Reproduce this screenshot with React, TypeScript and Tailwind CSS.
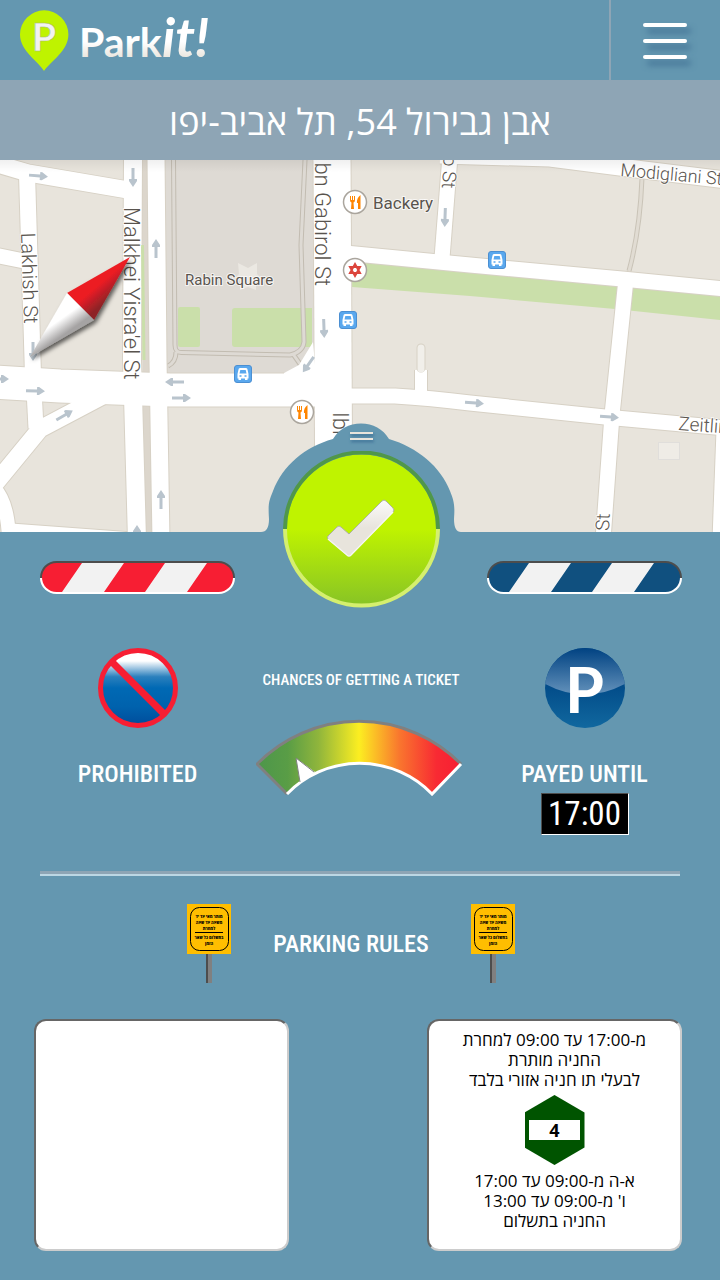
import React from 'react';

const ROADS: { d: string; w: number }[] = [
  { d: 'M-6 3 L28 13 L128 30', w: 17 },
  { d: 'M27 14 L33 215', w: 16 },
  { d: 'M-6 95 L24 101', w: 15 },
  { d: 'M133 -4 L132 200 L137 380', w: 18 },
  { d: 'M156 -4 L158 200 L161 380', w: 17 },
  { d: 'M-6 222 L60 226 L170 230 L345 230', w: 33 },
  { d: 'M34 230 L36 268', w: 15 },
  { d: 'M112 231 L40 269 L-6 325', w: 17 },
  { d: 'M-6 328 Q8 342 9 380', w: 14 },
  { d: 'M4 370 L140 380', w: 14 },
  { d: 'M332 -4 L334 380', w: 37 },
  { d: 'M345 236 L395 236 Q430 238 470 243 L605 257 L726 268', w: 15 },
  { d: 'M345 93 L470 105 L622 119 L726 129', w: 15 },
  { d: 'M450 -4 L442 98', w: 15 },
  { d: 'M440 -5 L550 -2 L620 7 L726 20', w: 17 },
  { d: 'M626 119 L612 255 L603 380', w: 15 },
  { d: 'M724 270 L720 380', w: 15 },
  { d: 'M421 210 L421 236', w: 12 },
];

// [x, y, angle]
const ARROWS: [number, number, number][] = [
  [39, 16, 5], [133, 18, 90], [156, 88, -90], [174, 222, 180], [182, 238, 0],
  [36, 231, 2], [0, 219, 0], [65, 255, -30], [161, 339, -90], [33, 192, 90],
  [137, 374, -90], [324, 169, 88], [308, 205, 125], [445, 58, 92], [475, 243, 4], [610, 257, 4],
];

const Bus = ({ x, y }: { x: number; y: number }) => (
  <g transform={`translate(${x - 9} ${y - 9})`}>
    <rect x="0.5" y="0.5" width="17" height="17" rx="2.5" fill="#5aa8ee" stroke="#4b8fd2" />
    <path d="M4.500 4.5 Q4.500 3 6 3 H12 Q13.500 3 13.500 4.500 L14.500 9 V13.500 H13.500 V15 H11 V13.500 H7 V15 H4.500 V13.500 H3.500 V9Z" fill="#fff" />
    <path d="M6.300 5 H11.700 L12.500 8.500 H5.500Z" fill="#5aa8ee" />
    <path d="M5.500 11 H7.500 M10.500 11 H12.500" stroke="#5aa8ee" strokeWidth="1.300" />
  </g>
);

const Poi = ({ x, y, children }: { x: number; y: number; children: React.ReactNode }) => (
  <g transform={`translate(${x} ${y})`}>
    <circle r="11.500" fill="#fff" stroke="#aaa59d" strokeWidth="1.500" />
    {children}
  </g>
);

const Cutlery = () => (
  <g fill="#ff8500">
    <path d="M-5 -6 V-2 Q-5 0 -3.500 0.500 L-4 7 H-1 L-1.500 0.500 Q0 0 0 -2 V-6 H-1 V-2 H-2 V-6 H-3 V-2 H-4 V-6Z" />
    <path d="M5.500 -7 Q1.500 -4 2 1 H3 V7 H5.500Z" />
  </g>
);

const CityMap = () => (
  <svg
    role="img"
    aria-label="Map"
    viewBox="0 0 720 372"
    preserveAspectRatio="xMidYMid slice"
    className="block h-[372px] w-full"
  >
    <defs>
      <linearGradient id="needleRed" gradientUnits="userSpaceOnUse" x1="88" y1="124" x2="104" y2="143">
        <stop offset="0.3" stopColor="#ec1c24" />
        <stop offset="1" stopColor="#8e2228" />
      </linearGradient>
      <linearGradient id="needleWhite" gradientUnits="userSpaceOnUse" x1="58" y1="155" x2="72" y2="175">
        <stop offset="0.2" stopColor="#fff" />
        <stop offset="0.8" stopColor="#a5a3a3" />
      </linearGradient>
      <linearGradient id="mapTop" x1="0" y1="0" x2="0" y2="1">
        <stop offset="0" stopColor="#000" stopOpacity="0.06" />
        <stop offset="1" stopColor="#000" stopOpacity="0" />
      </linearGradient>
      <filter id="needleShadow" x="-20%" y="-20%" width="150%" height="150%">
        <feDropShadow dx="2" dy="3" stdDeviation="2" floodOpacity="0.6" />
      </filter>
    </defs>
    <rect width="720" height="372" fill="#e8e4dc" />
    <path d="M142 0 H150 L154 372 H143Z" fill="#dcd6cc" />

    {/* Parks */}
    <path d="M352 101 L470 112 L720 136 V160 L615 149 L470 136 L352 127Z" fill="#cadfaa" />
    <path d="M165 0 H316 V213 H165Z" fill="#dedad4" />
    <rect x="178" y="147" width="22" height="40" rx="2" fill="#cadfaa" />
    <path d="M235 148 H312 V187 H235 Q232 187 232 184 V151 Q232 148 235 148Z" fill="#cadfaa" />
    <path
      d="M173.500 0 L175 185 Q175 193 182 192.500 L290 195 Q303 192 304 182 L301 85 L305 0 M176 192 Q176 202 168 206 M293 194 L300 204"
      fill="none" stroke="#c2bcb1" strokeWidth="5"
    />
    <path
      d="M173.500 0 L175 185 Q175 193 182 192.500 L290 195 Q303 192 304 182 L301 85 L305 0 M176 192 Q176 202 168 206 M293 194 L300 204"
      fill="none" stroke="#dedad4" strokeWidth="3"
    />
    <path d="M238 103 L248 108 L257 103 V114 L262 119 L256 122 V130 L248 127 L240 130 V121 L236 117 L239 114Z" fill="#ebe8e2" />
    <path d="M642 18 Q640 70 629 111" fill="none" stroke="#c9c3b7" strokeWidth="5" />
    <path d="M642 18 Q640 70 629 111" fill="none" stroke="#e1dcd3" strokeWidth="3" />
    <rect x="658.500" y="282.500" width="21" height="17" fill="#efece6" stroke="#e0dedb" />

    {/* Streets */}
    <g fill="none" stroke="#d7d1c5">
      {ROADS.map((r) => <path key={r.d} d={r.d} strokeWidth={r.w + 2} />)}
    </g>
    <g fill="none" stroke="#fff">
      {ROADS.map((r) => <path key={r.d} d={r.d} strokeWidth={r.w} />)}
    </g>
    <path d="M313 182 L299 205 L284 213 L284 216 H316Z" fill="#fff" />
    <path d="M142.500 85 L144 200" stroke="#cadfaa" strokeWidth="3" />
    <path d="M421 188 V208" stroke="#d7d1c5" strokeWidth="9" strokeLinecap="round" />
    <path d="M421 188 V209" stroke="#f1efea" strokeWidth="7" strokeLinecap="round" />
    <g fill="#b9c4cd">
      {ARROWS.map(([x, y, a]) => (
        <path key={`${x}-${y}`} transform={`translate(${x} ${y}) rotate(${a})`} d="M-10 -1.500 H1 V-4 H3 L9 0 L3 4 H1 V1.500 H-10Z" />
      ))}
    </g>

    {/* Labels */}
    <g
      fill="#59544e" stroke="#fff" strokeWidth="2" strokeOpacity="0.7"
      className="font-['Roboto',sans-serif] font-light [paint-order:stroke]"
    >
      <text transform="translate(21 73) rotate(88)" fontSize="20">Lakhish St</text>
      <text transform="translate(124 47) rotate(90)" fontSize="22">Malkhei Yisra'el St</text>
      <text transform="translate(315 126) rotate(90)" fontSize="22" textAnchor="end">Ibn Gabirol St</text>
      <text transform="translate(333 252) rotate(90)" fontSize="22">Ibn</text>
      <text transform="translate(442 28) rotate(93)" fontSize="19" textAnchor="end">o St</text>
      <text transform="translate(609 371) rotate(-88)" fontSize="19">St</text>
      <text transform="translate(620 16) rotate(5)" fontSize="18">Modigliani St</text>
      <text transform="translate(678 270) rotate(4)" fontSize="19">Zeitlin</text>
      <text x="373" y="49" fontSize="17" className="font-normal">Backery</text>
      <text x="185" y="125" fontSize="15" className="font-normal">Rabin Square</text>
    </g>

    <Bus x={348} y={160} />
    <Bus x={243} y={214} />
    <Bus x={497} y={100} />
    <Poi x={355} y={42}><Cutlery /></Poi>
    <Poi x={302} y={252}><Cutlery /></Poi>
    <Poi x={355} y={110}>
      <path d="M0 -6 L5 3 H-5Z M0 6 L5 -3 H-5Z" fill="none" stroke="#dc453c" strokeWidth="2" />
    </Poi>

    {/* Compass needle */}
    <g filter="url(#needleShadow)">
      <path d="M130 97 L67 133 L94 160Z" fill="url(#needleRed)" />
      <path d="M30 197 L67 133 L94 160Z" fill="url(#needleWhite)" />
    </g>
    <rect width="720" height="12" fill="url(#mapTop)" />
  </svg>
);

const StripedBar = ({ id, color }: { id: string; color: string }) => (
  <svg viewBox="0 0 195 33" className="block h-[33px] w-[195px]" aria-hidden="true">
    <clipPath id={id}><rect x="2" y="2" width="191" height="29" rx="14.500" /></clipPath>
    <path d="M0 17 V16.500 A16.500 16.500 0 0 1 16.500 0 H178.500 A16.500 16.500 0 0 1 195 16.500 V17Z" fill="#4d4d4d" />
    <path d="M0 17 A16.500 16 0 0 0 16.500 33 H178.500 A16.500 16 0 0 0 195 17Z" fill="#fff" />
    <g clipPath={`url(#${id})`}>
      <rect width="195" height="33" fill={color} />
      <path d="M42 2 H84 L64 31 H22Z M125 2 H167 L147 31 H105Z" fill="#f2f2f2" />
    </g>
  </svg>
);

const Gauge = () => (
  <svg viewBox="2 0 210 80" className="block h-[80px] w-[210px]" role="img" aria-label="Low chance">
    <defs>
      <linearGradient id="risk">
        <stop offset="0" stopColor="#4d964b" />
        <stop offset="0.15" stopColor="#599d46" />
        <stop offset="0.3" stopColor="#8fb53c" />
        <stop offset="0.5" stopColor="#fcee21" />
        <stop offset="0.7" stopColor="#f9752e" />
        <stop offset="0.88" stopColor="#f82a33" />
        <stop offset="1" stopColor="#f71e33" />
      </linearGradient>
    </defs>
    <path d="M3 46 A143 143 0 0 1 207 46 L178 76 A101 101 0 0 0 33 76Z" fill="url(#risk)" />
    <path d="M33 76 L3 46 A143 143 0 0 1 207 46" fill="none" stroke="#808080" strokeWidth="3" />
    <path d="M207 46 L178 76 A101 101 0 0 0 33 76" fill="none" stroke="#fff" strokeWidth="3" />
    <path d="M42 40 L61 54 L46 65Z" fill="#fff" />
    <path d="M46 64 L42 40 L60 54" fill="none" stroke="#808080" />
  </svg>
);

const NoParking = () => (
  <svg viewBox="0 0 80 80" className="block size-20" aria-hidden="true">
    <defs>
      <linearGradient id="noPark" x1="0" y1="0" x2="0" y2="1">
        <stop offset="0.06" stopColor="#fff" />
        <stop offset="0.14" stopColor="#fff" />
        <stop offset="0.35" stopColor="#2b80bd" />
        <stop offset="0.5" stopColor="#0069b4" />
        <stop offset="0.75" stopColor="#0062ad" />
        <stop offset="1" stopColor="#004c9b" />
      </linearGradient>
    </defs>
    <circle cx="40" cy="40" r="37.500" fill="url(#noPark)" stroke="#f71e33" strokeWidth="5" />
    <path d="M14 14 L66 66" stroke="#f71e33" strokeWidth="7" />
  </svg>
);

const PaidParking = () => (
  <svg viewBox="0 0 80 80" className="block size-20" role="img" aria-label="Paid parking">
    <defs>
      <linearGradient id="paid" x1="0" y1="0" x2="0" y2="1">
        <stop offset="0.4" stopColor="#004886" />
        <stop offset="1" stopColor="#11689f" />
      </linearGradient>
      <linearGradient id="gloss" x1="0" y1="0" x2="0" y2="1">
        <stop offset="0" stopColor="#004282" />
        <stop offset="1" stopColor="#6492bb" />
      </linearGradient>
    </defs>
    <circle cx="40" cy="40" r="40" fill="url(#paid)" />
    <path d="M0.200 36 A40 40 0 0 1 79.800 36 Q40 57 0.200 36Z" fill="url(#gloss)" />
    <text x="20" y="65" fontSize="63" fill="#fff" className="font-['Lato',sans-serif] font-bold">P</text>
  </svg>
);

const SIGN_LINES = ['מותר מאי עד יד', 'משעה עד שעה', 'למחרת'];

const RoadSign = () => (
  <svg viewBox="0 0 44 79" className="block h-[79px] w-11" aria-hidden="true">
    <path d="M19 50 H25 V79 H19Z" fill="#808080" />
    <path d="M19 50 H21 V79 H19Z" fill="#4d4d4d" />
    <rect width="44" height="50" fill="#ffbe00" />
    <rect x="3.500" y="3.500" width="38" height="43" rx="9" fill="none" stroke="#000" />
    <path d="M8 28.500 H36" stroke="#000" />
    <g fontSize="4" textAnchor="middle" className="font-['Open_Sans','DejaVu_Sans',sans-serif] font-extrabold">
      {SIGN_LINES.map((line, i) => <text key={line} x="22" y={14 + i * 6}>{line}</text>)}
      <text x="22" y="35">בתשלום כל שאר</text>
      <text x="22" y="41">הזמן</text>
    </g>
  </svg>
);

const Caption = ({ children }: { children: React.ReactNode }) => (
  <h2 className="font-['Roboto_Condensed','Roboto',sans-serif] text-[24px] font-medium leading-8 whitespace-nowrap">
    {children}
  </h2>
);

const RuleCard = ({ children }: { children?: React.ReactNode }) => (
  <section className="flex h-[232px] w-[255px] flex-col items-center rounded-xl border-2 border-[#666] border-r-[#ccc] border-b-[#ccc] bg-white pt-[9px] text-center font-['Open_Sans','DejaVu_Sans',sans-serif] text-[17px] leading-5 text-black">
    {children}
  </section>
);

export default function App() {
  return (
    <div className="min-h-screen bg-[#6497b0] text-white">
      {/* Header */}
      <header className="flex h-20 items-stretch">
        <a href="#" className="flex flex-1 items-center pl-5" aria-label="Parkit!">
          <svg viewBox="0 0 200 62" className="h-[62px] w-[200px]">
            <defs>
              <linearGradient id="logoInk" gradientUnits="userSpaceOnUse" x1="0" y1="15" x2="0" y2="50">
                <stop offset="0.5" stopColor="#fff" />
                <stop offset="1" stopColor="#e8e4dc" />
              </linearGradient>
            </defs>
            <path d="M24 62 C19 53 0 42 0 25.500 A24.200 24.200 0 0 1 48.400 25.500 C48.400 42 30 53 24 62Z" fill="#bff300" />
            <g className="font-['Lato',sans-serif] font-bold">
              <text x="12" y="42" fontSize="39" fill="#f2f2f2" stroke="#a7b96a" strokeWidth="0.500">P</text>
              <text x="59" y="48" fontSize="41" fill="url(#logoInk)">Park</text>
              <text x="142" y="48" fontSize="54" fill="url(#logoInk)" className="italic">it!</text>
            </g>
          </svg>
        </a>
        <button
          type="button"
          aria-label="Menu"
          className="flex w-[111px] flex-col items-center justify-center gap-3 border-l-2 border-[#8ea5b5] pt-0.5 pr-0.5"
        >
          <span className="h-1 w-11 rounded-full bg-white shadow-[4px_6px_6px_#3f6f92]"></span>
          <span className="h-1 w-11 rounded-full bg-white shadow-[4px_6px_6px_#3f6f92]"></span>
          <span className="h-1 w-11 rounded-full bg-white shadow-[4px_6px_6px_#3f6f92]"></span>
        </button>
      </header>

      {/* Current address */}
      <div className="flex h-20 items-center justify-center bg-[#8ea5b5] pt-1">
        <h1 dir="rtl" className="font-['Open_Sans','DejaVu_Sans',sans-serif] text-[36px] leading-10">
          אבן גבירול 54, תל אביב-יפו
        </h1>
      </div>

      <CityMap />

      <main className="relative">
        {/* Drawer bump over the map */}
        <svg
          viewBox="0 0 202 110"
          className="absolute -top-[109px] left-1/2 h-[110px] w-[202px] -translate-x-[99px]"
          aria-hidden="true"
        >
          <defs>
            <filter id="gripShadow" x="-20%" y="-50%" width="150%" height="250%">
              <feDropShadow dx="1" dy="2" stdDeviation="1.500" floodColor="#2c5f8a" floodOpacity="0.8" />
            </filter>
          </defs>
          <path
            d="M0 110 V109 Q8 109 8 96 C7 80 8 78 12 68 C22 42 44 24 72 16 C78 6 88 0.500 100 0.500 C112 0.500 122 6 128 16 C156 24 180 44 189 68 C193 78 194 82 193 96 Q193 109 200 109 V110Z"
            fill="#6497b0"
          />
          <path d="M89 10 H112 M89 16 H112" stroke="#e8e4dc" strokeWidth="2" filter="url(#gripShadow)" />
        </svg>

        <div className="grid grid-cols-[195px_1fr_195px] justify-items-center pt-[29px] pr-[38px] pl-10">
          <section className="flex flex-col items-center">
            <StripedBar id="barRed" color="#f71e33" />
            <div className="mt-[54px] mb-[30px]"><NoParking /></div>
            <Caption>PROHIBITED</Caption>
          </section>

          <section className="flex flex-col items-center">
            <button type="button" aria-label="Confirm" className="relative z-10 -mt-[110px] rounded-full">
              <svg viewBox="0 0 157 157" className="block size-[157px]">
                <defs>
                  <linearGradient id="lime" x1="0" y1="0" x2="0" y2="1">
                    <stop offset="0.5" stopColor="#bff300" />
                    <stop offset="1" stopColor="#88c425" />
                  </linearGradient>
                  <linearGradient id="tick" x1="0" y1="0" x2="0" y2="1">
                    <stop offset="0" stopColor="#fbfbfa" />
                    <stop offset="0.5" stopColor="#e8e4dc" />
                  </linearGradient>
                </defs>
                <circle cx="78.500" cy="78.500" r="75" fill="url(#lime)" />
                <path d="M2 78 A76.500 76.500 0 0 1 155 78" fill="none" stroke="#50974a" strokeWidth="4" />
                <path d="M2 78 A76.500 76.500 0 0 0 155 78" fill="none" stroke="#d5ef6e" strokeWidth="4" />
                <path
                  d="M45 85 L54 76 Q56 74 58 76 L66 83 L99 50 Q101 48 103 50 L110 57 Q112 59 110 61 L68 104 Q66 106 64 104 L45 88 Q44 86 45 85Z"
                  fill="url(#tick)" stroke="#aeb29c"
                />
                <path d="M45 88 L64 104 Q66 106 68 104 L110 61" fill="none" stroke="#f7f7f4" strokeWidth="1.500" />
              </svg>
            </button>
            <h2 className="mt-[60px] mb-[26px] font-['Roboto_Condensed','Roboto',sans-serif] text-[15px] font-medium leading-6 whitespace-nowrap">
              CHANCES OF GETTING A TICKET
            </h2>
            <Gauge />
          </section>

          <section className="flex flex-col items-center">
            <StripedBar id="barBlue" color="#10507f" />
            <div className="mt-[54px] mb-[30px]"><PaidParking /></div>
            <Caption>PAYED UNTIL</Caption>
            <time className="mt-[3px] flex h-[42px] w-[88px] items-center justify-center border border-[#4d4d4d] border-r-white border-b-white bg-black font-['Roboto_Condensed','Roboto',sans-serif] text-[33px] leading-10">
              17:00
            </time>
          </section>
        </div>

        <hr className="mx-10 mt-9 h-[5px] border-t-[3px] border-b-2 border-t-[#8ea5b5] border-b-[#bcd7e4]" />

        {/* Rules */}
        <div className="mt-7 flex items-center justify-center gap-[42px] pr-[18px]">
          <RoadSign />
          <Caption>PARKING RULES</Caption>
          <RoadSign />
        </div>

        <div dir="rtl" className="mt-9 flex justify-between pr-[38px] pb-[29px] pl-[34px]">
          <RuleCard>
            <p>מ-17:00 עד 09:00 למחרת</p>
            <p>החניה מותרת</p>
            <p>לבעלי תו חניה אזורי בלבד</p>
            <div className="mt-[5px] mb-1.5 flex h-[70px] w-[60px] items-center justify-center bg-[#005400] [clip-path:polygon(50%_0,100%_25%,100%_75%,50%_100%,0_75%,0_25%)]">
              <span className="w-[51px] bg-white text-[18px] font-bold leading-5">4</span>
            </div>
            <p>א-ה מ-09:00 עד 17:00</p>
            <p>ו' מ-09:00 עד 13:00</p>
            <p>החניה בתשלום</p>
          </RuleCard>
          <RuleCard />
        </div>
      </main>
    </div>
  );
}
